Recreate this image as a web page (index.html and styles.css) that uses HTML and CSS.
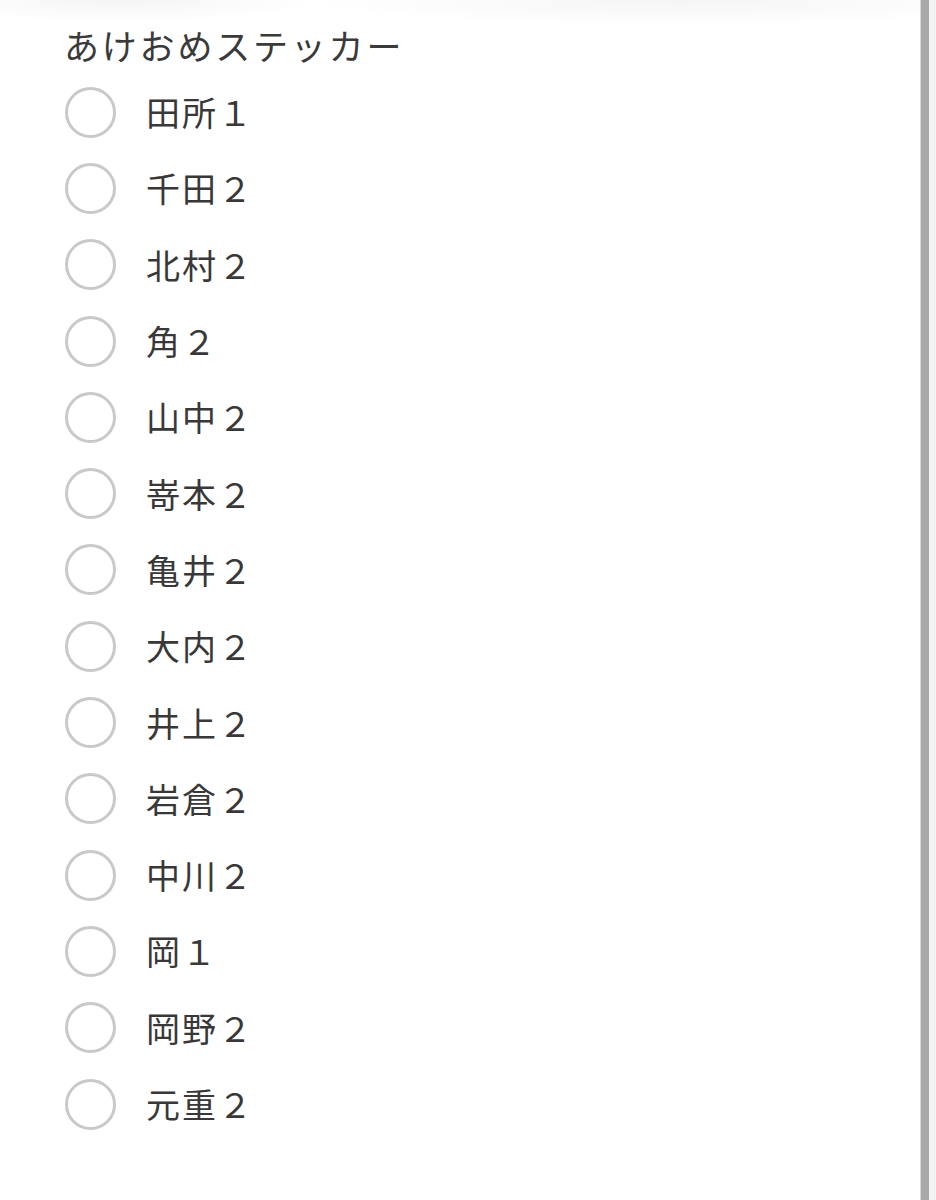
FILE: index.html
```html
<!DOCTYPE html>
<html lang="ja">
<head>
<meta charset="utf-8">
<link rel="stylesheet" href="styles.css">
</head>
<body>
<div class="page">
  <main class="form">
    <div class="shade"></div>
    <h1 class="title">あけおめステッカー</h1>
    <ul class="options">
      <li class="option"><span class="radio"></span><span class="label">田所１</span></li>
      <li class="option"><span class="radio"></span><span class="label">千田２</span></li>
      <li class="option"><span class="radio"></span><span class="label">北村２</span></li>
      <li class="option"><span class="radio"></span><span class="label">角２</span></li>
      <li class="option"><span class="radio"></span><span class="label">山中２</span></li>
      <li class="option"><span class="radio"></span><span class="label">嵜本２</span></li>
      <li class="option"><span class="radio"></span><span class="label">亀井２</span></li>
      <li class="option"><span class="radio"></span><span class="label">大内２</span></li>
      <li class="option"><span class="radio"></span><span class="label">井上２</span></li>
      <li class="option"><span class="radio"></span><span class="label">岩倉２</span></li>
      <li class="option"><span class="radio"></span><span class="label">中川２</span></li>
      <li class="option"><span class="radio"></span><span class="label">岡１</span></li>
      <li class="option"><span class="radio"></span><span class="label">岡野２</span></li>
      <li class="option"><span class="radio"></span><span class="label">元重２</span></li>
    </ul>
  </main>
  <div class="scrollbar"></div>
  <div class="edge"></div>
</div>
</body>
</html>
```
FILE: styles.css
```css
html, body {
  margin: 0;
  padding: 0;
  background: #ffffff;
}
body {
  font-family: "Noto Sans CJK JP", "Noto Sans", sans-serif;
  color: #383838;
}
.page {
  display: flex;
  width: 936px;
  height: 1200px;
  overflow: hidden;
}
.form {
  flex: 1;
  position: relative;
  padding-left: 64px;
}
.shade {
  position: absolute;
  left: 0;
  right: 0;
  top: 0;
  height: 30px;
  background:
    radial-gradient(ellipse 200px 22px at 120px 0, rgba(0,0,0,0.045), rgba(0,0,0,0) 100%),
    radial-gradient(ellipse 380px 26px at 680px 0, rgba(0,0,0,0.04), rgba(0,0,0,0) 100%);
}
.title {
  margin: 0;
  padding-top: 22px;
  height: 74px;
  box-sizing: border-box;
  font-size: 35px;
  font-weight: 400;
  line-height: 46px;
  letter-spacing: 2.8px;
  color: #3a3a3a;
  white-space: nowrap;
}
.options {
  list-style: none;
  margin: 0;
  padding: 0;
}
.option {
  display: flex;
  align-items: center;
  height: 76.3px;
}
.radio {
  width: 51px;
  height: 51px;
  box-sizing: border-box;
  border: 3px solid #c9c9c9;
  border-radius: 50%;
  flex: none;
  margin-left: 1px;
}
.label {
  margin-left: 30px;
  font-size: 34px;
  line-height: 42px;
  letter-spacing: 2px;
  color: #383838;
  white-space: nowrap;
}
.scrollbar {
  flex: none;
  width: 8px;
  background: #a8a8a8;
  border-left: 1px solid #d8d8d8;
}
.edge {
  flex: none;
  width: 7px;
  background: #f3f3f3;
}
```
